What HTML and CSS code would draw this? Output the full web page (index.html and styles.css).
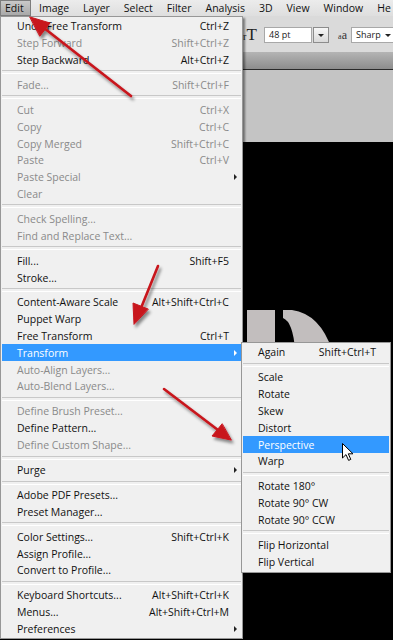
FILE: index.html
```html
<!DOCTYPE html>
<html lang="en">
<head>
    <meta charset="UTF-8">
    <meta name="viewport" content="width=device-width, initial-scale=1.0">
    <title>Edit menu</title>
    <link rel="stylesheet" href="styles.css">
</head>
<body>
    <div class="app">
        <div class="menubar">
            <span class="mb-item active">Edit</span>
            <span class="mb-item">Image</span>
            <span class="mb-item">Layer</span>
            <span class="mb-item">Select</span>
            <span class="mb-item">Filter</span>
            <span class="mb-item">Analysis</span>
            <span class="mb-item">3D</span>
            <span class="mb-item">View</span>
            <span class="mb-item">Window</span>
            <span class="mb-item">He</span>
        </div>

        <div class="workspace">
            <div class="options">
                <span class="type-icon"><span class="small">r</span>T</span>
                <span class="field size">48 pt</span>
                <span class="drop"><span class="tri"></span></span>
                <span class="aa">a<span class="big">a</span></span>
                <span class="field sharp">Sharp <span class="tri"></span></span>
            </div>
            <div class="tabbar"></div>
            <div class="pasteboard"></div>
            <div class="canvas">
                <svg width="393" height="498" viewBox="0 142 393 498">
                    <rect x="247" y="310" width="28" height="40" fill="#c2bebe"/>
                    <path d="M283 310 L292 310 Q320 314 332 350 L295 350 Q293 322 283 318 Z" fill="#c2bebe"/>
                </svg>
            </div>
        </div>

        <!-- Edit menu -->
        <div class="menu edit-menu">
            <div class="item"><span>Undo Free Transform</span><span class="key">Ctrl+Z</span><span class="sub"></span></div>
            <div class="item off"><span>Step Forward</span><span class="key">Shift+Ctrl+Z</span><span class="sub"></span></div>
            <div class="item"><span>Step Backward</span><span class="key">Alt+Ctrl+Z</span><span class="sub"></span></div>
            <div class="sep"></div>
            <div class="item off"><span>Fade...</span><span class="key">Shift+Ctrl+F</span><span class="sub"></span></div>
            <div class="sep"></div>
            <div class="item off"><span>Cut</span><span class="key">Ctrl+X</span><span class="sub"></span></div>
            <div class="item off"><span>Copy</span><span class="key">Ctrl+C</span><span class="sub"></span></div>
            <div class="item off"><span>Copy Merged</span><span class="key">Shift+Ctrl+C</span><span class="sub"></span></div>
            <div class="item off"><span>Paste</span><span class="key">Ctrl+V</span><span class="sub"></span></div>
            <div class="item off"><span>Paste Special</span><span class="key"></span><span class="sub arrow"></span></div>
            <div class="item off"><span>Clear</span><span class="key"></span><span class="sub"></span></div>
            <div class="sep"></div>
            <div class="item off"><span>Check Spelling...</span><span class="key"></span><span class="sub"></span></div>
            <div class="item off"><span>Find and Replace Text...</span><span class="key"></span><span class="sub"></span></div>
            <div class="sep"></div>
            <div class="item"><span>Fill...</span><span class="key">Shift+F5</span><span class="sub"></span></div>
            <div class="item"><span>Stroke...</span><span class="key"></span><span class="sub"></span></div>
            <div class="sep"></div>
            <div class="item"><span>Content-Aware Scale</span><span class="key">Alt+Shift+Ctrl+C</span><span class="sub"></span></div>
            <div class="item"><span>Puppet Warp</span><span class="key"></span><span class="sub"></span></div>
            <div class="item"><span>Free Transform</span><span class="key">Ctrl+T</span><span class="sub"></span></div>
            <div class="item hot"><span>Transform</span><span class="key"></span><span class="sub arrow"></span></div>
            <div class="item off"><span>Auto-Align Layers...</span><span class="key"></span><span class="sub"></span></div>
            <div class="item off"><span>Auto-Blend Layers...</span><span class="key"></span><span class="sub"></span></div>
            <div class="sep"></div>
            <div class="item off"><span>Define Brush Preset...</span><span class="key"></span><span class="sub"></span></div>
            <div class="item"><span>Define Pattern...</span><span class="key"></span><span class="sub"></span></div>
            <div class="item off"><span>Define Custom Shape...</span><span class="key"></span><span class="sub"></span></div>
            <div class="sep"></div>
            <div class="item"><span>Purge</span><span class="key"></span><span class="sub arrow"></span></div>
            <div class="sep"></div>
            <div class="item"><span>Adobe PDF Presets...</span><span class="key"></span><span class="sub"></span></div>
            <div class="item"><span>Preset Manager...</span><span class="key"></span><span class="sub"></span></div>
            <div class="sep"></div>
            <div class="item"><span>Color Settings...</span><span class="key">Shift+Ctrl+K</span><span class="sub"></span></div>
            <div class="item"><span>Assign Profile...</span><span class="key"></span><span class="sub"></span></div>
            <div class="item"><span>Convert to Profile...</span><span class="key"></span><span class="sub"></span></div>
            <div class="sep"></div>
            <div class="item"><span>Keyboard Shortcuts...</span><span class="key">Alt+Shift+Ctrl+K</span><span class="sub"></span></div>
            <div class="item"><span>Menus...</span><span class="key">Alt+Shift+Ctrl+M</span><span class="sub"></span></div>
            <div class="item"><span>Preferences</span><span class="key"></span><span class="sub arrow"></span></div>
        </div>

        <!-- Transform submenu -->
        <div class="menu sub-menu">
            <div class="item"><span>Again</span><span class="key">Shift+Ctrl+T</span></div>
            <div class="sep"></div>
            <div class="item"><span>Scale</span></div>
            <div class="item"><span>Rotate</span></div>
            <div class="item"><span>Skew</span></div>
            <div class="item"><span>Distort</span></div>
            <div class="item hot"><span>Perspective</span></div>
            <div class="item"><span>Warp</span></div>
            <div class="sep"></div>
            <div class="item"><span>Rotate 180°</span></div>
            <div class="item"><span>Rotate 90° CW</span></div>
            <div class="item"><span>Rotate 90° CCW</span></div>
            <div class="sep"></div>
            <div class="item"><span>Flip Horizontal</span></div>
            <div class="item"><span>Flip Vertical</span></div>
        </div>

        <!-- red arrows drawn over the screenshot -->
        <svg class="marks" width="393" height="640" viewBox="0 0 393 640">
            <defs>
                <filter id="shadow" x="-20%" y="-20%" width="140%" height="140%">
                    <feDropShadow dx="2" dy="3" stdDeviation="1.6" flood-color="#000" flood-opacity="0.45"/>
                </filter>
            </defs>
            <g fill="#c8141c" stroke="#c8141c" stroke-width="2.6" stroke-linecap="round" filter="url(#shadow)">
                <line x1="131" y1="96" x2="44" y2="28"/>
                <polygon points="30,17 50,23 40,36" stroke-width="1"/>
                <line x1="158" y1="266" x2="141" y2="308"/>
                <polygon points="134,324 133,303 148,309" stroke-width="1"/>
                <line x1="164" y1="389" x2="218" y2="430"/>
                <polygon points="231,440 212,436 222,424" stroke-width="1"/>
            </g>
            <path class="cursor" d="M342.5 443.5 L342.5 458 L346 454.6 L348.6 460.4 L350.8 459.4 L348.3 453.8 L353 453.8 Z" fill="#fff" stroke="#000" stroke-width="1"/>
        </svg>
    </div>
</body>
</html>
```

FILE: styles.css
```css
* {
    margin: 0;
    padding: 0;
    box-sizing: border-box;
}

body {
    width: 393px;
    height: 640px;
    overflow: hidden;
    background: #000;
    font-family: 'Open Sans', 'Noto Sans', sans-serif;
    font-size: 10.5px;
}

.app {
    position: relative;
    width: 393px;
    height: 640px;
    display: flex;
    flex-direction: column;
    overflow: hidden;
}

/* top menu bar */
.menubar {
    height: 16px;
    display: flex;
    align-items: center;
    background: linear-gradient(#ececec, #dedede);
    color: #111;
    white-space: nowrap;
}

.mb-item {
    flex-shrink: 0;
    height: 16px;
    line-height: 16px;
    padding: 0 6px 0 8px;
}

.mb-item.active {
    background: linear-gradient(#c9c9c9, #a9a9a9);
    border: 1px solid #7d7d7d;
    line-height: 14px;
    width: 31px;
    padding: 0 0 0 4px;
}

/* workspace under the menu */
.workspace {
    flex: 1;
    display: flex;
    flex-direction: column;
}

.options {
    height: 36px;
    display: flex;
    align-items: center;
    justify-content: flex-end;
    background: #dadada;
    padding-top: 2px;
}

.type-icon {
    font-family: 'Liberation Serif', serif;
    font-size: 17px;
    color: #222;
    width: 19px;
    margin-right: 2px;
}

.type-icon .small {
    font-size: 10px;
}

.field {
    height: 16px;
    background: #fff;
    border: 1px solid #a8a8a8;
    font-size: 9px;
    line-height: 14px;
    padding-left: 4px;
    color: #222;
}

.size {
    width: 48px;
}

.drop {
    width: 16px;
    height: 16px;
    margin-left: 1px;
    border: 1px solid #8c8c8c;
    background: linear-gradient(#f7f7f7, #d9d9d9);
    display: flex;
    align-items: center;
    justify-content: center;
}

.tri {
    display: inline-block;
    border-left: 3px solid transparent;
    border-right: 3px solid transparent;
    border-top: 3px solid #222;
}

.aa {
    font-family: 'Liberation Serif', serif;
    font-size: 8px;
    color: #333;
    margin: 0 4px 0 9px;
}

.aa .big {
    font-size: 12px;
}

.sharp {
    width: 42px;
    border-right: 0;
    display: flex;
    align-items: center;
    justify-content: space-between;
    padding-right: 2px;
}

.tabbar {
    height: 18px;
    background: linear-gradient(#b4b4b4, #8d8d8d);
    border-bottom: 1px solid #2a2a2a;
}

.pasteboard {
    height: 72px;
    background: #c4c4c4;
}

.canvas {
    flex: 1;
    background: #000;
    overflow: hidden;
}

.canvas svg {
    display: block;
}

/* drop-down menus */
.menu {
    position: absolute;
    background: #f0f0f0;
    border: 1px solid #979797;
    padding: 1px 0;
    box-shadow: 2px 2px 2px rgba(0, 0, 0, 0.45);
    color: #111;
}

.edit-menu {
    left: 0;
    top: 16px;
    width: 243px;
}

.sub-menu {
    left: 241px;
    top: 342px;
    width: 150px;
    padding-bottom: 2px;
}

.item {
    height: 16.8px;
    margin: 0 1px;
    display: flex;
    align-items: center;
    padding-left: 15px;
    white-space: nowrap;
}

.sub-menu .item {
    padding-left: 15px;
    padding-right: 13px;
}

.item .key {
    margin-left: auto;
}

.item .sub {
    width: 12px;
    height: 100%;
    display: flex;
    align-items: center;
    padding-left: 5px;
}

.item .arrow::before {
    content: "";
    border-top: 3px solid transparent;
    border-bottom: 3px solid transparent;
    border-left: 3px solid #222;
}

.item.off {
    color: #8a8a8a;
}

.item.hot {
    background: #3399ff;
    color: #fff;
}

.item.hot .arrow::before {
    border-left-color: #fff;
}

.sep {
    height: 8.2px;
    margin: 0 1px;
    display: flex;
    align-items: center;
}

.sep::before {
    content: "";
    flex: 1;
    height: 2px;
    border-top: 1px solid #c8c8c8;
    border-bottom: 1px solid #fff;
}

.marks {
    position: absolute;
    left: 0;
    top: 0;
    pointer-events: none;
}
```
